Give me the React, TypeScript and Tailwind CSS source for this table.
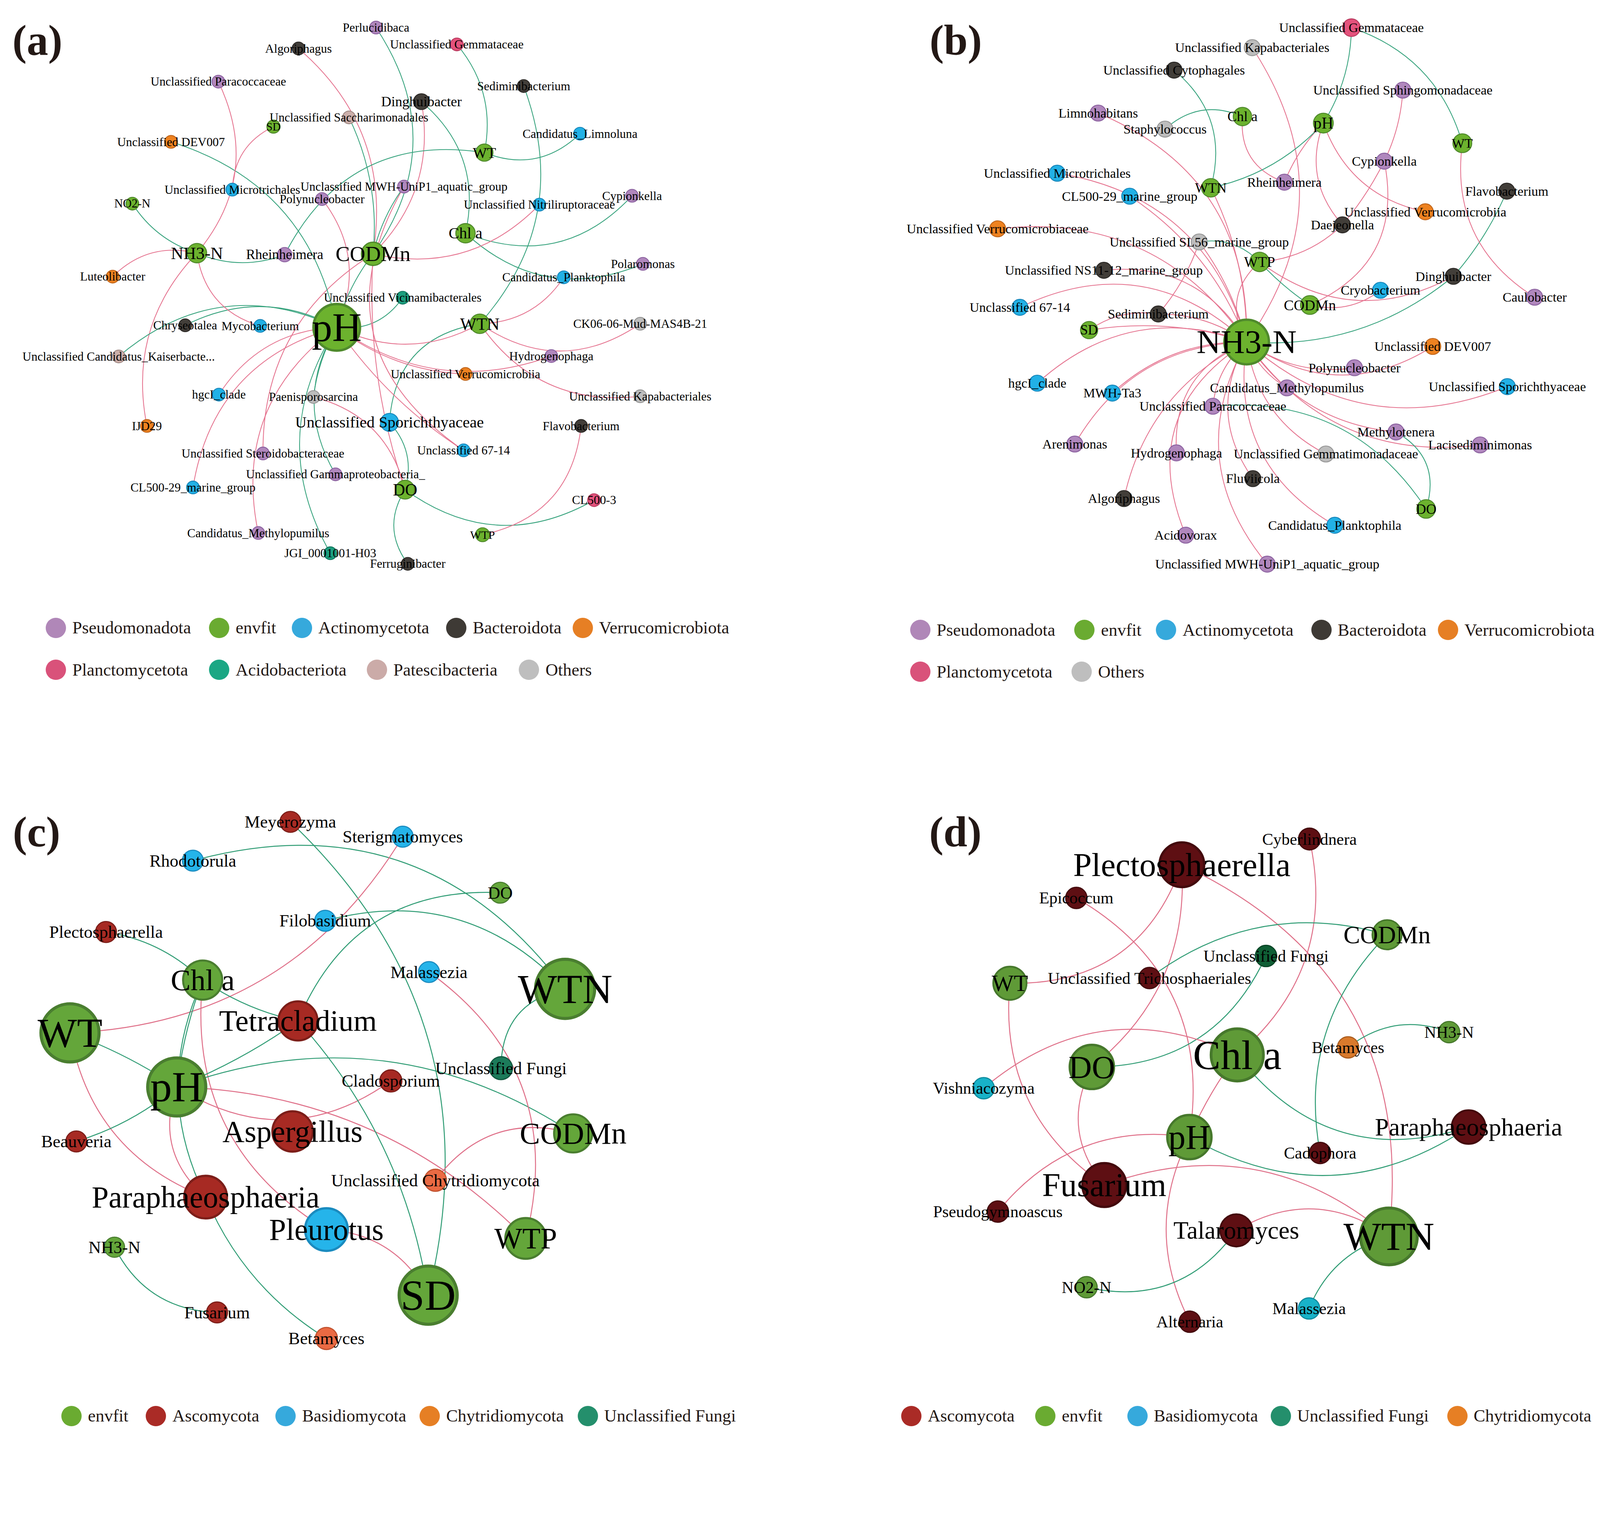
import React from "react";

type Nd = [string, string, number, number, number?, number?];
type Ed = [string, string, "p" | "g", number];
type Pal = Record<string, [string, string]>;
type LI = [string, string, string];

const BAC: Pal = {
  P: ["#b087bd", "#8c62a0"],
  E: ["#6cb22e", "#4f8a2c"],
  A: ["#22b1e6", "#1887bb"],
  B: ["#423e39", "#2c2926"],
  V: ["#ee8220", "#c0651a"],
  Pl: ["#e4527c", "#b93a5e"],
  Ac: ["#1c9e7e", "#137860"],
  Pa: ["#ccafaa", "#a08a85"],
  O: ["#bdbdbd", "#979797"],
};
const FUN_C: Pal = {
  As: ["#a72a23", "#7c1e19"],
  E: ["#64a63a", "#4a7e30"],
  Ba: ["#25b4ea", "#1a8bbf"],
  Ch: ["#ea6a43", "#c1522f"],
  UF: ["#1c7b5a", "#135a41"],
};
const FUN_D: Pal = {
  As: ["#5e0f13", "#430a0d"],
  E: ["#5f9a37", "#46782c"],
  Ba: ["#18b2c8", "#0f8b9e"],
  Ch: ["#d97a2c", "#ab5d1f"],
  UF: ["#0f5f35", "#0a4526"],
};

const NA: Nd[] = [
  ["Perlucidibaca", "P", 368.5, 27],
  ["Algoriphagus", "B", 292.5, 47.5],
  ["Unclassified Gemmataceae", "Pl", 447.7, 43.5],
  ["Unclassified Paracoccaceae", "P", 214, 80],
  ["Sediminibacterium", "B", 513.2, 84.3],
  ["Dinghuibacter", "B", 413, 99.6, 8.2, 13.8],
  ["Unclassified Saccharimonadales", "Pa", 342, 115],
  ["SD", "E", 268, 124, 6.9, 11],
  ["Unclassified DEV007", "V", 167.6, 139],
  ["WT", "E", 474.7, 149.5, 8.9, 14.7],
  ["Candidatus_Limnoluna", "A", 568.4, 131],
  ["Unclassified Microtrichales", "A", 227.7, 185.8],
  ["Unclassified MWH-UniP1_aquatic_group", "P", 395.9, 182.8],
  ["NO2-N", "E", 129.7, 199.5, 6.7, 11.8],
  ["Polynucleobacter", "P", 315.6, 195],
  ["Cypionkella", "P", 619.4, 191.8],
  ["Unclassified Nitriliruptoraceae", "A", 528.6, 200.5],
  ["Chl a", "E", 456.2, 228.5, 10, 15.5],
  ["NH3-N", "E", 193, 248, 10, 17],
  ["Rheinheimera", "P", 279, 249.5, 7.5, 13.5],
  ["CODMn", "E", 365.6, 248.7, 12, 21],
  ["Polaromonas", "P", 630, 258.5],
  ["Luteolibacter", "V", 110.4, 271],
  ["Candidatus_Planktophila", "A", 552.5, 271.7],
  ["Unclassified Vicinamibacterales", "Ac", 394.6, 291.7],
  ["Chryseotalea", "B", 181.5, 318.7],
  ["Mycobacterium", "A", 255, 319.3],
  ["WTN", "E", 470.2, 317.2, 10, 17],
  ["CK06-06-Mud-MAS4B-21", "O", 627.4, 317.2],
  ["Unclassified Candidatus_Kaiserbacte...", "Pa", 116.3, 349.2],
  ["Hydrogenophaga", "P", 540.3, 348.8],
  ["Unclassified Verrucomicrobiia", "V", 456.2, 366.4],
  ["hgcI_clade", "A", 214.5, 386.6],
  ["Paenisporosarcina", "O", 307.2, 388.9],
  ["Unclassified Kapabacteriales", "O", 627.4, 388.2],
  ["IJD29", "V", 144, 417.3],
  ["Unclassified Sporichthyaceae", "A", 381.7, 413.8, 9.3, 15.6],
  ["Flavobacterium", "B", 569.5, 417.3],
  ["Unclassified 67-14", "A", 454.3, 441.2],
  ["Unclassified Steroidobacteraceae", "P", 257.7, 444.3],
  ["Unclassified Gammaproteobacteria_", "P", 328.8, 464.7],
  ["CL500-29_marine_group", "A", 189.1, 477.6],
  ["DO", "E", 397, 479.7, 9.7, 16.6],
  ["CL500-3", "Pl", 582.2, 490],
  ["Candidatus_Methylopumilus", "P", 253.1, 522.2],
  ["WTP", "E", 472.9, 523.9, 7.3, 11.5],
  ["JGI_0001001-H03", "Ac", 323.7, 542],
  ["Ferruginibacter", "B", 399.6, 552.4],
  ["pH", "E", 330, 320.7, 24, 40],
];

const EA: Ed[] = [
  ["Perlucidibaca", "CODMn", "g", -0.17],
  ["Algoriphagus", "CODMn", "p", -0.14],
  ["Unclassified Gemmataceae", "WT", "g", -0.12],
  ["Sediminibacterium", "WTN", "g", -0.15],
  ["Dinghuibacter", "Chl a", "g", -0.15],
  ["Dinghuibacter", "CODMn", "p", -0.13],
  ["WT", "Candidatus_Limnoluna", "g", 0.16],
  ["Rheinheimera", "WT", "g", -0.18],
  ["Chl a", "Cypionkella", "g", 0.17],
  ["Chl a", "Polaromonas", "g", 0.16],
  ["Unclassified Nitriliruptoraceae", "CODMn", "p", -0.14],
  ["Candidatus_Planktophila", "WTN", "p", -0.13],
  ["Unclassified Vicinamibacterales", "pH", "g", -0.15],
  ["WTN", "Unclassified Sporichthyaceae", "g", 0.2],
  ["WTN", "CK06-06-Mud-MAS4B-21", "p", 0.17],
  ["WTN", "Unclassified Kapabacteriales", "p", 0.15],
  ["pH", "Hydrogenophaga", "p", 0.13],
  ["pH", "Unclassified Verrucomicrobiia", "p", 0.08],
  ["pH", "WTN", "p", 0.13],
  ["Unclassified Sporichthyaceae", "DO", "g", -0.14],
  ["pH", "Unclassified 67-14", "p", 0.05],
  ["Unclassified MWH-UniP1_aquatic_group", "Unclassified 67-14", "p", 0.23],
  ["Paenisporosarcina", "DO", "p", -0.15],
  ["Paenisporosarcina", "pH", "g", -0.05],
  ["Unclassified Gammaproteobacteria_", "pH", "g", -0.15],
  ["JGI_0001001-H03", "pH", "g", -0.15],
  ["Candidatus_Methylopumilus", "pH", "p", -0.16],
  ["Unclassified Steroidobacteraceae", "CODMn", "p", -0.14],
  ["CL500-29_marine_group", "pH", "p", -0.16],
  ["hgcI_clade", "pH", "p", -0.13],
  ["NH3-N", "IJD29", "p", 0.13],
  ["Unclassified Candidatus_Kaiserbacte...", "pH", "g", -0.16],
  ["Chryseotalea", "pH", "g", -0.13],
  ["NH3-N", "Mycobacterium", "p", 0.16],
  ["DO", "CL500-3", "g", 0.16],
  ["Flavobacterium", "WTP", "p", -0.18],
  ["DO", "Ferruginibacter", "g", 0.17],
  ["Unclassified Saccharimonadales", "CODMn", "g", -0.07],
  ["Unclassified DEV007", "pH", "g", -0.15],
  ["SD", "Unclassified Microtrichales", "p", 0.15],
  ["Unclassified Paracoccaceae", "NH3-N", "p", -0.16],
  ["NO2-N", "NH3-N", "g", 0.09],
  ["Luteolibacter", "NH3-N", "p", -0.14],
  ["NH3-N", "Rheinheimera", "g", 0.1],
  ["Polynucleobacter", "pH", "p", -0.15],
  ["Unclassified MWH-UniP1_aquatic_group", "CODMn", "g", 0.05],
  ["CODMn", "pH", "g", 0.05],
  ["CODMn", "DO", "p", 0.05],
];

const NB: Nd[] = [
  ["Unclassified Gemmataceae", "Pl", 1324.4, 27.1, 9.1],
  ["Unclassified Kapabacteriales", "O", 1227.2, 46.7],
  ["Unclassified Cytophagales", "B", 1150.6, 68.7],
  ["Unclassified Sphingomonadaceae", "P", 1374.8, 88.3],
  ["Limnohabitans", "P", 1076.2, 110.8],
  ["Chl a", "E", 1217.6, 114.2, 9.5, 13.8],
  ["pH", "E", 1296.9, 120.6, 10.2, 16],
  ["Staphylococcus", "O", 1141.7, 126.5],
  ["WT", "E", 1433.1, 140.3, 9.7, 13.2],
  ["Cypionkella", "P", 1356.6, 157.9],
  ["Unclassified Microtrichales", "A", 1036.1, 169.7],
  ["Rheinheimera", "P", 1258.7, 178.5],
  ["WTN", "E", 1186.6, 184, 9.5, 13.6],
  ["Flavobacterium", "B", 1476.7, 187.3],
  ["CL500-29_marine_group", "A", 1107.1, 192.2],
  ["Unclassified Verrucomicrobiia", "V", 1396.8, 207.5],
  ["Daejeonella", "B", 1315.6, 220.3],
  ["Unclassified Verrucomicrobiaceae", "V", 977.7, 224.2],
  ["Unclassified SL56_marine_group", "O", 1175.2, 237],
  ["WTP", "E", 1234.4, 256.6, 10, 14.4],
  ["Unclassified NS11-12_marine_group", "B", 1081.8, 264.8],
  ["Dinghuibacter", "B", 1424.3, 270.7],
  ["Cryobacterium", "A", 1352.9, 284.4],
  ["Caulobacter", "P", 1504, 291.2],
  ["CODMn", "E", 1283.7, 298.8, 9.7, 14.6],
  ["Unclassified 67-14", "A", 999.5, 301.1],
  ["Sediminibacterium", "B", 1135.1, 307.6],
  ["SD", "E", 1067.3, 323.4, 8.9, 13.5],
  ["Unclassified DEV007", "V", 1404.1, 339.4],
  ["Polynucleobacter", "P", 1327.4, 360.3],
  ["hgcI_clade", "A", 1016.5, 375.4],
  ["Unclassified Sporichthyaceae", "A", 1477.2, 378.8],
  ["Candidatus_Methylopumilus", "P", 1261.2, 380],
  ["MWH-Ta3", "A", 1090.1, 385.1],
  ["Unclassified Paracoccaceae", "P", 1188.6, 398],
  ["Methylotenera", "P", 1368.1, 423.2],
  ["Arenimonas", "P", 1053.3, 435],
  ["Lacisediminimonas", "P", 1450.5, 435.9],
  ["Hydrogenophaga", "P", 1152.9, 443.7],
  ["Unclassified Gemmatimonadaceae", "O", 1299.4, 444.8],
  ["Fluviicola", "B", 1227.8, 468.9],
  ["Algoriphagus", "B", 1101.5, 488.4],
  ["DO", "E", 1397.6, 498.6, 9.6, 14.1],
  ["Candidatus_Planktophila", "A", 1308.1, 514.6],
  ["Acidovorax", "P", 1162, 524.3],
  ["Unclassified MWH-UniP1_aquatic_group", "P", 1241.9, 552.7],
  ["NH3-N", "E", 1221.7, 335.1, 23, 32.7],
];

const EB: Ed[] = [
  ["Unclassified Gemmataceae", "pH", "g", -0.07],
  ["Unclassified Gemmataceae", "WT", "g", -0.13],
  ["Unclassified Kapabacteriales", "NH3-N", "p", -0.17],
  ["Unclassified Cytophagales", "WTN", "g", -0.16],
  ["Staphylococcus", "Chl a", "g", -0.16],
  ["Limnohabitans", "NH3-N", "p", -0.17],
  ["Unclassified Microtrichales", "NH3-N", "p", -0.16],
  ["CL500-29_marine_group", "NH3-N", "p", -0.08],
  ["Unclassified Verrucomicrobiaceae", "NH3-N", "p", -0.15],
  ["Unclassified SL56_marine_group", "NH3-N", "p", -0.05],
  ["Unclassified SL56_marine_group", "WTP", "g", -0.13],
  ["Unclassified NS11-12_marine_group", "NH3-N", "p", -0.16],
  ["Unclassified 67-14", "NH3-N", "p", -0.17],
  ["Sediminibacterium", "NH3-N", "p", -0.08],
  ["Sediminibacterium", "Unclassified SL56_marine_group", "p", 0.05],
  ["SD", "NH3-N", "p", -0.06],
  ["SD", "Sediminibacterium", "p", -0.1],
  ["hgcI_clade", "NH3-N", "p", -0.15],
  ["MWH-Ta3", "NH3-N", "p", -0.1],
  ["Arenimonas", "NH3-N", "p", -0.14],
  ["Hydrogenophaga", "NH3-N", "p", -0.18],
  ["Algoriphagus", "NH3-N", "p", -0.12],
  ["Acidovorax", "NH3-N", "p", -0.21],
  ["Unclassified MWH-UniP1_aquatic_group", "NH3-N", "p", -0.17],
  ["Fluviicola", "NH3-N", "p", -0.16],
  ["Candidatus_Planktophila", "NH3-N", "p", -0.17],
  ["Unclassified Gemmatimonadaceae", "NH3-N", "p", -0.13],
  ["NH3-N", "Candidatus_Methylopumilus", "p", 0.08],
  ["NH3-N", "Lacisediminimonas", "p", 0.15],
  ["NH3-N", "Unclassified Sporichthyaceae", "p", 0.155],
  ["NH3-N", "Polynucleobacter", "p", 0.1],
  ["NH3-N", "Unclassified DEV007", "p", 0.165],
  ["NH3-N", "Unclassified Paracoccaceae", "p", 0.1],
  ["NH3-N", "Methylotenera", "p", 0.12],
  ["NH3-N", "Dinghuibacter", "g", 0.1],
  ["Flavobacterium", "Dinghuibacter", "g", -0.04],
  ["WT", "Caulobacter", "p", 0.16],
  ["Unclassified Sphingomonadaceae", "Cypionkella", "p", -0.05],
  ["Cypionkella", "Daejeonella", "p", -0.03],
  ["Cypionkella", "CODMn", "p", -0.2],
  ["pH", "Rheinheimera", "p", 0.05],
  ["Chl a", "Rheinheimera", "p", 0.19],
  ["pH", "WTN", "g", -0.08],
  ["pH", "Daejeonella", "p", 0.15],
  ["pH", "Unclassified Verrucomicrobiia", "p", 0.14],
  ["Daejeonella", "WTP", "p", -0.09],
  ["WTP", "CODMn", "g", 0.03],
  ["WTP", "Dinghuibacter", "p", 0.16],
  ["CODMn", "Cryobacterium", "p", 0.12],
  ["WTP", "NH3-N", "p", 0.2],
  ["WTN", "NH3-N", "p", -0.06],
  ["Unclassified Paracoccaceae", "DO", "g", -0.15],
  ["Methylotenera", "DO", "g", -0.2],
];

const NC: Nd[] = [
  ["Meyerozyma", "As", 284.6, 805.2],
  ["Sterigmatomyces", "Ba", 394.7, 819.7],
  ["Rhodotorula", "Ba", 189, 843.2],
  ["DO", "E", 490.2, 874.6],
  ["Filobasidium", "Ba", 318.7, 902.1],
  ["Plectosphaerella", "As", 103.9, 913.1],
  ["Malassezia", "Ba", 420.4, 952.3],
  ["WTN", "E", 553.8, 968.8, 30.5, 40.7],
  ["Chl a", "E", 198.6, 960.2, 20.2, 29.3],
  ["WT", "E", 68.6, 1011.9, 30, 40.9],
  ["Tetracladium", "As", 292, 1000.2, 20.2, 29.4],
  ["Unclassified Fungi", "UF", 491, 1046.5, 11.8],
  ["pH", "E", 173.2, 1064.9, 30, 42.5],
  ["Cladosporium", "As", 383, 1059, 11.4],
  ["CODMn", "E", 561.7, 1110.4, 19.7, 29.9],
  ["Aspergillus", "As", 286.7, 1108.5, 20.8, 29.9],
  ["Beauveria", "As", 74.8, 1118.3],
  ["Unclassified Chytridiomycota", "Ch", 426.7, 1156.3, 11.4],
  ["Paraphaeosphaeria", "As", 201.5, 1172.8, 22, 29.8],
  ["Pleurotus", "Ba", 319.9, 1204.6, 22, 29.7],
  ["WTP", "E", 515.2, 1213.3, 21, 29.1],
  ["SD", "E", 419.6, 1268.9, 30, 42.3],
  ["NH3-N", "E", 112.2, 1221.9, 10.4],
  ["Fusarium", "As", 212.7, 1285.8],
  ["Betamyces", "Ch", 319.9, 1311.3, 11.4],
];

const EC: Ed[] = [
  ["Meyerozyma", "SD", "g", -0.145],
  ["Rhodotorula", "WTN", "g", -0.17],
  ["Sterigmatomyces", "WT", "p", -0.134],
  ["DO", "Tetracladium", "g", 0.175],
  ["Filobasidium", "WTN", "g", -0.15],
  ["Plectosphaerella", "Chl a", "g", -0.08],
  ["Chl a", "Tetracladium", "g", 0.05],
  ["Chl a", "pH", "g", 0.03],
  ["Chl a", "Pleurotus", "p", 0.158],
  ["Chl a", "Paraphaeosphaeria", "g", 0.12],
  ["WT", "Paraphaeosphaeria", "p", 0.14],
  ["pH", "Paraphaeosphaeria", "p", 0.17],
  ["WT", "pH", "g", -0.03],
  ["pH", "Tetracladium", "g", 0.03],
  ["pH", "CODMn", "g", -0.125],
  ["pH", "Cladosporium", "p", 0.167],
  ["pH", "WTP", "p", -0.1],
  ["pH", "Beauveria", "g", -0.05],
  ["Tetracladium", "SD", "g", -0.075],
  ["Malassezia", "WTP", "p", -0.17],
  ["WTN", "Unclassified Fungi", "g", 0.2],
  ["CODMn", "Unclassified Chytridiomycota", "p", 0.17],
  ["Pleurotus", "SD", "p", -0.14],
  ["Paraphaeosphaeria", "Betamyces", "g", 0.08],
  ["NH3-N", "Fusarium", "g", 0.147],
];

const ND: Nd[] = [
  ["Cyberlindnera", "As", 1283.3, 822, 11.3],
  ["Plectosphaerella", "As", 1158.2, 847.2, 23, 32.5],
  ["Epicoccum", "As", 1054.8, 879.7],
  ["CODMn", "E", 1359.3, 915.8, 15.2, 24.4],
  ["Unclassified Fungi", "UF", 1240.7, 936.6],
  ["Unclassified Trichosphaeriales", "As", 1126.5, 958.2],
  ["WT", "E", 989.7, 963.3, 17.2, 22.9],
  ["NH3-N", "E", 1420.1, 1011.2],
  ["Betamyces", "Ch", 1321.1, 1026.1],
  ["Chl a", "E", 1212.5, 1033.5, 27, 40.6],
  ["DO", "E", 1070, 1045.3, 22.8, 31.6],
  ["Vishniacozyma", "Ba", 964, 1066.1],
  ["Paraphaeosphaeria", "As", 1439.2, 1104.2, 17.4, 24.5],
  ["pH", "E", 1165.6, 1114, 22.8, 33.7],
  ["Cadophora", "As", 1293.7, 1129.6],
  ["Fusarium", "As", 1082.2, 1161, 22.6, 32.2],
  ["Pseudogymnoascus", "As", 977.9, 1187],
  ["Talaromyces", "As", 1211.6, 1205.4, 16.7, 24.2],
  ["WTN", "E", 1361.1, 1211.3, 29.3, 39.1],
  ["NO2-N", "E", 1064.8, 1261.1],
  ["Malassezia", "Ba", 1282.9, 1281.9],
  ["Alternaria", "As", 1166, 1294.9],
];

const ED: Ed[] = [
  ["Cyberlindnera", "Chl a", "p", -0.15],
  ["Plectosphaerella", "WT", "p", -0.18],
  ["Plectosphaerella", "DO", "p", -0.13],
  ["Plectosphaerella", "WTN", "p", -0.18],
  ["Epicoccum", "pH", "p", -0.17],
  ["CODMn", "Unclassified Trichosphaeriales", "g", 0.125],
  ["CODMn", "Cadophora", "g", 0.13],
  ["Unclassified Fungi", "DO", "g", -0.16],
  ["WT", "Fusarium", "p", 0.147],
  ["NH3-N", "Betamyces", "g", 0.14],
  ["Vishniacozyma", "Chl a", "p", -0.16],
  ["Chl a", "Paraphaeosphaeria", "g", 0.175],
  ["Chl a", "pH", "p", 0.03],
  ["DO", "Fusarium", "p", 0.164],
  ["pH", "Pseudogymnoascus", "p", 0.142],
  ["pH", "Paraphaeosphaeria", "g", 0.155],
  ["pH", "Alternaria", "p", 0.127],
  ["Fusarium", "WTN", "p", -0.145],
  ["Talaromyces", "WTN", "p", -0.16],
  ["Talaromyces", "NO2-N", "g", -0.166],
  ["WTN", "Malassezia", "g", 0.12],
];

function edgePath(a: Nd, b: Nd, k: number) {
  const dx = b[2] - a[2];
  const dy = b[3] - a[3];
  const len = Math.hypot(dx, dy) || 1;
  const nx = -dy / len;
  const ny = dx / len;
  const cx = (a[2] + b[2]) / 2 + 2 * k * len * nx;
  const cy = (a[3] + b[3]) / 2 + 2 * k * len * ny;
  return `M${a[2]} ${a[3]} Q${cx.toFixed(2)} ${cy.toFixed(2)} ${b[2]} ${b[3]}`;
}

function Network(props: {
  nodes: Nd[];
  edges: Ed[];
  pal: Pal;
  r0: number;
  fs0: number;
  vb: string;
  tag: string;
  tx: number;
  ty: number;
  pink: string;
  green: string;
  ew: number;
}) {
  const { nodes, edges, pal, r0, fs0, vb, tag, tx, ty, pink, green, ew } = props;
  const map = new Map<string, Nd>(nodes.map((n) => [n[0], n]));
  return (
    <svg viewBox={vb} className="block w-full h-auto shrink-0">
      <g fill="none" strokeWidth={ew} strokeLinecap="round">
        {edges.map(([a, b, c, k], i) => {
          const A = map.get(a);
          const B = map.get(b);
          if (!A || !B) return null;
          return <path key={i} d={edgePath(A, B, k)} stroke={c === "p" ? pink : green} />;
        })}
      </g>
      {nodes.map((n) => {
        const r = n[4] ?? r0;
        const sw = Math.max(0.9, r * 0.1);
        const [f, s] = pal[n[1]];
        return <circle key={n[0]} cx={n[2]} cy={n[3]} r={r - sw / 2} fill={f} stroke={s} strokeWidth={sw} />;
      })}
      <g fill="#000">
        {nodes.map((n) => (
          <text key={n[0]} x={n[2]} y={n[3]} fontSize={n[5] ?? fs0} textAnchor="middle" dominantBaseline="central">
            {n[0]}
          </text>
        ))}
      </g>
      <text x={tx} y={ty} fontSize={42} fontWeight={700} fill="#231815">
        {tag}
      </text>
    </svg>
  );
}

function Legend({ rows, cls }: { rows: { pl: string; items: LI[] }[]; cls: string }) {
  return (
    <div className={cls}>
      {rows.map((row, i) => (
        <div key={i} className={`flex items-center h-[1.2927vw] ${row.pl}`}>
          {row.items.map(([label, bg, w]) => (
            <div key={label} className={`flex items-center shrink-0 ${w}`}>
              <span className={`block w-[1.2696vw] h-[1.2696vw] rounded-full shrink-0 ${bg}`} />
              <span className="ml-[0.3924vw] text-[1.085vw] leading-none whitespace-nowrap text-[#231815]">{label}</span>
            </div>
          ))}
        </div>
      ))}
    </div>
  );
}

const PINK_B = "#e5738f";
const GREEN_B = "#35a27c";
const PINK_F = "#df6f88";
const GREEN_F = "#2f9c74";

export default function App() {
  return (
    <div className="w-screen h-screen overflow-hidden bg-white font-['Liberation_Serif',serif]">
      <div className="w-full grid grid-cols-2 grid-rows-[44.898vw_44.898vw]">
        <div className="flex flex-col min-w-0">
          <Network
            nodes={NA}
            edges={EA}
            pal={BAC}
            r0={6.7}
            fs0={12}
            vb="0 0 784 598"
            tag="(a)"
            tx={12.2}
            ty={53.5}
            pink={PINK_B}
            green={GREEN_B}
            ew={0.8}
          />
          <Legend
            cls="flex flex-col pt-[0.4386vw] gap-[1.3389vw]"
            rows={[
              {
                pl: "pl-[2.8624vw]",
                items: [
                  ["Pseudomonadota", "bg-[#b087b8]", "w-[10.203vw]"],
                  ["envfit", "bg-[#6aab31]", "w-[5.171vw]"],
                  ["Actinomycetota", "bg-[#36a9dc]", "w-[9.649vw]"],
                  ["Bacteroidota", "bg-[#3e3a35]", "w-[7.895vw]"],
                  ["Verrucomicrobiota", "bg-[#e67f24]", "w-auto"],
                ],
              },
              {
                pl: "pl-[2.8624vw]",
                items: [
                  ["Planctomycetota", "bg-[#d9527a]", "w-[10.203vw]"],
                  ["Acidobacteriota", "bg-[#1ba784]", "w-[9.857vw]"],
                  ["Patescibacteria", "bg-[#cbaba8]", "w-[9.511vw]"],
                  ["Others", "bg-[#bebebe]", "w-auto"],
                ],
              },
            ]}
          />
        </div>
        <div className="flex flex-col min-w-0">
          <Network
            nodes={NB}
            edges={EB}
            pal={BAC}
            r0={8.3}
            fs0={13}
            vb="784 0 784 598"
            tag="(b)"
            tx={911}
            ty={53.5}
            pink={PINK_B}
            green={GREEN_B}
            ew={0.8}
          />
          <Legend
            cls="flex flex-col pt-[0.5771vw] gap-[1.3158vw]"
            rows={[
              {
                pl: "pl-[6.879vw]",
                items: [
                  ["Pseudomonadota", "bg-[#b087b8]", "w-[10.272vw]"],
                  ["envfit", "bg-[#6aab31]", "w-[5.102vw]"],
                  ["Actinomycetota", "bg-[#36a9dc]", "w-[9.695vw]"],
                  ["Bacteroidota", "bg-[#3e3a35]", "w-[7.918vw]"],
                  ["Verrucomicrobiota", "bg-[#e67f24]", "w-auto"],
                ],
              },
              {
                pl: "pl-[6.879vw]",
                items: [
                  ["Planctomycetota", "bg-[#d9527a]", "w-[10.088vw]"],
                  ["Others", "bg-[#bebebe]", "w-auto"],
                ],
              },
            ]}
          />
        </div>
        <div className="flex flex-col min-w-0">
          <Network
            nodes={NC}
            edges={EC}
            pal={FUN_C}
            r0={10.8}
            fs0={17}
            vb="0 704 784 660"
            tag="(c)"
            tx={12.5}
            ty={829}
            pink={PINK_F}
            green={GREEN_F}
            ew={0.95}
          />
          <Legend
            cls="flex flex-col pt-[0.831vw]"
            rows={[
              {
                pl: "pl-[3.832vw]",
                items: [
                  ["envfit", "bg-[#6aab31]", "w-[5.286vw]"],
                  ["Ascomycota", "bg-[#aa2b26]", "w-[8.103vw]"],
                  ["Basidiomycota", "bg-[#36a9dc]", "w-[9.003vw]"],
                  ["Chytridiomycota", "bg-[#e67f24]", "w-[9.88vw]"],
                  ["Unclassified Fungi", "bg-[#248f6c]", "w-auto"],
                ],
              },
            ]}
          />
        </div>
        <div className="flex flex-col min-w-0">
          <Network
            nodes={ND}
            edges={ED}
            pal={FUN_D}
            r0={11}
            fs0={16.2}
            vb="784 704 784 660"
            tag="(d)"
            tx={910.6}
            ty={829}
            pink={PINK_F}
            green={GREEN_F}
            ew={0.95}
          />
          <Legend
            cls="flex flex-col pt-[0.831vw]"
            rows={[
              {
                pl: "pl-[6.325vw]",
                items: [
                  ["Ascomycota", "bg-[#aa2b26]", "w-[8.38vw]"],
                  ["envfit", "bg-[#6aab31]", "w-[5.748vw]"],
                  ["Basidiomycota", "bg-[#36a9dc]", "w-[8.957vw]"],
                  ["Unclassified Fungi", "bg-[#248f6c]", "w-[11.034vw]"],
                  ["Chytridiomycota", "bg-[#e67f24]", "w-auto"],
                ],
              },
            ]}
          />
        </div>
      </div>
    </div>
  );
}
